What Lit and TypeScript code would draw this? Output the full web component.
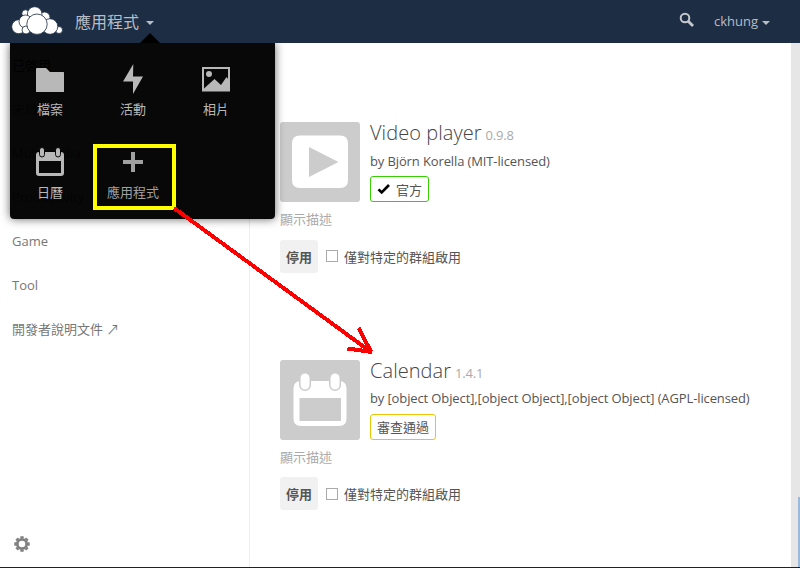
import { LitElement, html, css, svg } from "lit";
import { customElement, property } from "lit/decorators.js";

const glyphs: Record<string, unknown> = {
  folder: svg`<path d="M3 4h9l4 4h13.500q.5 0 .5.500V27.500q0 .5-.5.500H2.500q-.5 0-.5-.5V5q0-1 1-1z"/>`,
  bolt: svg`<path d="M16.300 0L6 17.500h10V30l10-17.500h-10z"/>`,
  picture: svg`<path fill-rule="evenodd" d="M2 3h28v24.500H2zM4 5v19.500l10.500-9.500 6.500 6 5.500-8 1.500 2V5z"/><circle cx="9" cy="10" r="3"/>`,
  plus: svg`<path d="M14 5h4v8h8v4h-8v8h-4v-8H6v-4h8z"/>`,
  calendar: svg`<path fill-rule="evenodd" d="M5 5h22q3 0 3 3v18q0 3-3 3H5q-3 0-3-3V8q0-3 3-3zM5 14v12h22V14z"/>
    <g stroke="var(--bg)" stroke-width="1"><rect x="5.500" y=".5" width="5" height="9.500" rx="2.500"/><rect x="21.500" y=".5" width="5" height="9.500" rx="2.500"/></g>`,
};

@customElement("app-tile")
class AppTile extends LitElement {
  @property() icon = "";
  @property() label = "";
  @property({ type: Boolean, reflect: true }) marked = false;
  static styles = css`
    :host { --bg: #070707; position: relative; display: flex; flex-direction: column; align-items: center; height: 83px; color: #b8b8b8; font-size: 13px; }
    svg { display: block; width: 32px; height: 32px; fill: currentColor; }
    .label { margin-top: 3px; line-height: 20px; white-space: nowrap; }
    :host([marked]) { color: #a0a0a0; }
    .mark { position: absolute; left: 1.5px; top: -3px; box-sizing: border-box; width: 83px; height: 66px; border: 4px solid #ff0; }
  `;
  render() {
    return html`<svg viewBox="0 0 32 32">${glyphs[this.icon]}</svg><span class="label">${this.label}</span>
      ${this.marked ? html`<div class="mark"></div>` : ""}`;
  }
}

@customElement("app-entry")
class AppEntry extends LitElement {
  @property() name = "";
  @property() version = "";
  @property() author = "";
  @property() level = "";
  @property() kind = "";
  static styles = css`
    :host { display: block; height: 237.5px; color: #555; font-size: 13px; }
    .top { display: flex; gap: 10px; height: 80px; }
    .thumb { width: 80px; height: 80px; background: #ccc; border-radius: 3px; flex: none; }
    .thumb svg { display: block; width: 80px; height: 80px; fill: #fff; }
    .info { display: flex; flex-direction: column; align-items: flex-start; white-space: nowrap; }
    h2 { margin: -3px 0 0; font-size: 20px; font-weight: 300; line-height: 28px; height: 28px; color: #444; letter-spacing: 0.06px; }
    .version { font-size: 13px; font-weight: 400; color: #aaa; margin-left: 4px; letter-spacing: -0.2px; }
    .author { line-height: 20px; margin-top: 3.7px; height: 20px; letter-spacing: -0.12px; }
    .badge { display: flex; align-items: center; box-sizing: border-box; height: 26px; margin-top: 5.4px; padding: 0 6px; border: 1px solid #e8c805; border-radius: 3px; }
    .badge.official { border-color: #37ce02; }
    .badge svg { width: 14px; height: 12px; margin-right: 5px; }
    .desc { margin-top: 7.4px; line-height: 20px; color: #aaa; }
    .actions { display: flex; align-items: center; margin-top: 10.5px; height: 33px; }
    .disable { font: inherit; font-weight: 600; color: #555; background: #f1f1f1; border: 0; border-radius: 3px; width: 38px; height: 33px; padding: 0; }
    .box { box-sizing: border-box; width: 12px; height: 12px; border: 1px solid #aaa; margin: 0 6px 0 8px; }
  `;
  render() {
    const official = this.kind === "video";
    return html`
      <div class="top">
        <div class="thumb">
          ${official
            ? html`<svg viewBox="0 0 80 80"><path fill-rule="evenodd" d="M20 13.500h40q8 0 8 8V58q0 8-8 8H20q-8 0-8-8V21.500q0-8 8-8zM29 25v30l29.500-15z"/></svg>`
            : html`<svg viewBox="0 0 80 80"><path fill-rule="evenodd" d="M21 21h38q7.500 0 7.500 7.500v30q0 7.500-7.500 7.500H21q-7.500 0-7.500-7.500v-30q0-7.500 7.500-7.500zM19.500 38v23h41.500V38z"/>
                <g stroke="#ccc" stroke-width="1.500"><rect x="19.800" y="12.800" width="10.500" height="17.500" rx="5.200"/><rect x="49.800" y="12.800" width="10.500" height="17.500" rx="5.200"/></g></svg>`}
        </div>
        <div class="info">
          <h2>${this.name}<span class="version">${this.version}</span></h2>
          <div class="author">by ${this.author}</div>
          <div class="badge ${official ? "official" : ""}">
            ${official ? html`<svg viewBox="0 0 14 12"><path d="M1.500 6.300l3.200 3.200L12 2" fill="none" stroke="#000" stroke-width="2.600"/></svg>` : ""}${this.level}
          </div>
        </div>
      </div>
      <div class="desc">顯示描述</div>
      <div class="actions"><button class="disable">停用</button><span class="box"></span><span>僅對特定的群組啟用</span></div>
    `;
  }
}

@customElement("app-root")
class AppRoot extends LitElement {
  static styles = css`
    :host { position: relative; display: flex; flex-direction: column; box-sizing: border-box; width: 800px; height: 568px; overflow: hidden; background: #fff; border-bottom: 1px solid #222; font-family: "Open Sans", "Noto Sans CJK TC", sans-serif; font-size: 13px; color: #777; }
    header { display: flex; align-items: center; flex: none; height: 43px; background: #1d2d44; color: #b8bdc5; }
    .logo { width: 52px; height: 30px; margin: -3px 0 0 11px; fill: #fff; stroke: #1d2d44; stroke-width: 0.8; }
    .current { font-size: 16px; margin-left: 12px; line-height: 24px; }
    .caret { border: 4px solid transparent; border-top-color: currentColor; border-bottom: 0; margin-left: 7px; margin-top: 2px; }
    .search { width: 16px; height: 16px; margin: -4px 19px 0 auto; }
    .user { line-height: 20px; margin-top: -1px; }
    .user + .caret { margin: 2px 30px 0 4px; }
    .body { display: flex; flex: 1; min-height: 0; }
    nav { display: flex; flex-direction: column; box-sizing: border-box; width: 250px; border-right: 1px solid #eee; padding-left: 12px; }
    nav span { line-height: 44px; height: 44px; }
    nav .active { color: #000; }
    .gear { width: 16px; height: 16px; margin: auto 0 15px 2px; }
    main { flex: 1; padding: 79px 0 0 30px; min-width: 0; }
    .track { display: flex; flex-direction: column; justify-content: flex-end; align-items: flex-end; width: 9px; background: #e6e6e6; }
    .thumb { width: 2px; height: 70px; background: #9ab9db; }
    .menu { position: absolute; left: 10px; top: 43px; box-sizing: border-box; width: 265px; height: 176px; padding-top: 21px; background: rgba(0,0,0,.97); border-radius: 0 0 4px 4px; box-shadow: 0 0 10px rgba(50,50,50,.75); clip-path: inset(0 -20px -20px -20px); }
    .tiles { display: grid; grid-template-columns: repeat(3, 83px); margin-left: -1.5px; }
    .pointer { position: absolute; left: 140px; top: 33px; border: 10px solid transparent; border-top: 0; border-bottom-color: #000; }
    .arrow { position: absolute; left: 170px; top: 200px; width: 210px; height: 160px; fill: none; stroke: #f00; stroke-width: 4; }
  `;
  render() {
    return html`
      <header>
        <svg class="logo" viewBox="11 4 52 30">
          <circle cx="25.500" cy="12.500" r="3.700"/><circle cx="44.500" cy="16.500" r="5.500"/><circle cx="34.700" cy="13" r="7.300"/>
          <circle cx="59" cy="29" r="3.500"/><circle cx="50" cy="25.500" r="7.800"/>
          <circle cx="18.700" cy="25.700" r="7"/><circle cx="25.500" cy="20.500" r="6.500"/><circle cx="26" cy="29" r="4"/><circle cx="37" cy="23.200" r="10.200"/>
        </svg>
        <span class="current">應用程式</span><span class="caret"></span>
        <svg class="search" viewBox="0 0 16 16" fill="none" stroke="#c4c8ce"><circle cx="6" cy="6" r="4.300" stroke-width="2"/><path d="M9 9l5 5" stroke-width="2.800"/></svg>
        <span class="user">ckhung</span><span class="caret"></span>
      </header>
      <div class="body">
        <nav>
          <span class="active">已啓用</span><span>未啟用</span><span>Multimedia</span><span>Productivity</span><span>Game</span><span>Tool</span><span>開發者說明文件 ↗</span>
          <svg class="gear" viewBox="0 0 16 16" fill="none" stroke="#808080"><circle cx="8" cy="8" r="4.700" stroke-width="2.800"/><path stroke-width="3.400" d="M8 .3v2M8 13.700v2M.3 8h2M13.700 8h2M2.600 2.600l1.400 1.400M12 12l1.400 1.400M2.600 13.400l1.400-1.400M12 4l1.400-1.400"/></svg>
        </nav>
        <main>
          <app-entry kind="video" name="Video player" version="0.9.8" author="Björn Korella (MIT-licensed)" level="官方"></app-entry>
          <app-entry kind="calendar" name="Calendar" version="1.4.1" author="[object Object],[object Object],[object Object] (AGPL-licensed)" level="審查通過"></app-entry>
        </main>
        <div class="track"><div class="thumb"></div></div>
      </div>
      <div class="pointer"></div>
      <div class="menu"><div class="tiles">
        <app-tile icon="folder" label="檔案"></app-tile>
        <app-tile icon="bolt" label="活動"></app-tile>
        <app-tile icon="picture" label="相片"></app-tile>
        <app-tile icon="calendar" label="日曆"></app-tile>
        <app-tile icon="plus" label="應用程式" marked></app-tile>
      </div></div>
      <svg class="arrow" viewBox="170 200 210 160" shape-rendering="crispEdges"><path d="M174 208L371 352M358.500 328L371 351.500M347.500 348.500L372 352"/></svg>
    `;
  }
}
